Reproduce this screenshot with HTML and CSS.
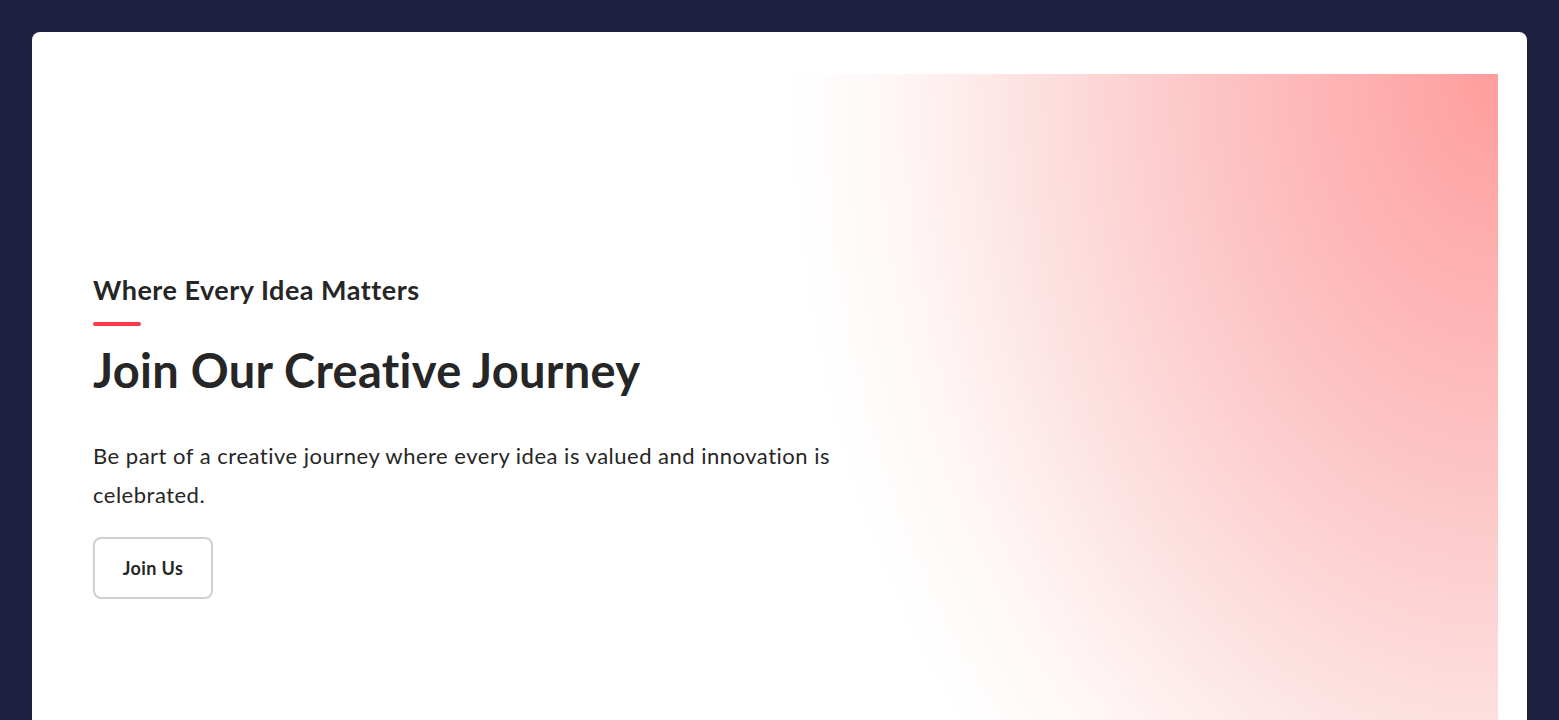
FILE: index.html
```html
<!DOCTYPE html>
<html lang="en">
<head>
<meta charset="utf-8">
<title>Join Our Creative Journey</title>
<link rel="stylesheet" href="styles.css">
</head>
<body>
  <main class="card">
    <section class="hero">
      <div class="hero-content">
        <h3 class="eyebrow">Where Every Idea Matters</h3>
        <span class="accent-bar"></span>
        <h1 class="title">Join Our Creative Journey</h1>
        <p class="lead">Be part of a creative journey where every idea is valued and innovation is celebrated.</p>
        <a class="btn" href="#">Join Us</a>
      </div>
    </section>
  </main>
</body>
</html>
```

FILE: styles.css
```css
* { box-sizing: border-box; }
html, body { margin: 0; }
body {
  background: #1f2040;
  padding: 32px;
  font-family: "Lato", "Noto Sans", sans-serif;
  color: #262626;
}
.card {
  background: #fff;
  border-radius: 8px;
  padding: 42px 29px 0 61px;
  min-height: 820px;
}
.hero {
  min-height: 760px;
  background: radial-gradient(ellipse 710px 1000px at 100% 0%,
    #ff9d9d 0%, #fdc4c4 40%, #fde0e0 65%, rgba(255,240,240,0.6) 85%, rgba(255,255,255,0) 100%);
  padding-top: 200px;
}
.hero-content {
  max-width: 780px;
}
.eyebrow {
  margin: 0;
  font-size: 27px;
  font-weight: 700;
  line-height: 32px;
  letter-spacing: 0.5px;
}
.accent-bar {
  display: block;
  width: 48px;
  height: 4px;
  border-radius: 2px;
  background: #fb3a48;
  margin: 16px 0 16px;
}
.title {
  margin: 0;
  font-size: 47px;
  font-weight: 700;
  line-height: 56px;
  letter-spacing: 0.3px;
}
.lead {
  margin: 38px 0 23px;
  font-size: 22px;
  line-height: 39px;
  letter-spacing: 0.5px;
}
.btn {
  display: inline-flex;
  align-items: center;
  justify-content: center;
  width: 120px;
  height: 62px;
  border: 2px solid #cfcfcf;
  border-radius: 8px;
  color: #262626;
  text-decoration: none;
  font-size: 18px;
  font-weight: 700;
  letter-spacing: 0.4px;
}
```
